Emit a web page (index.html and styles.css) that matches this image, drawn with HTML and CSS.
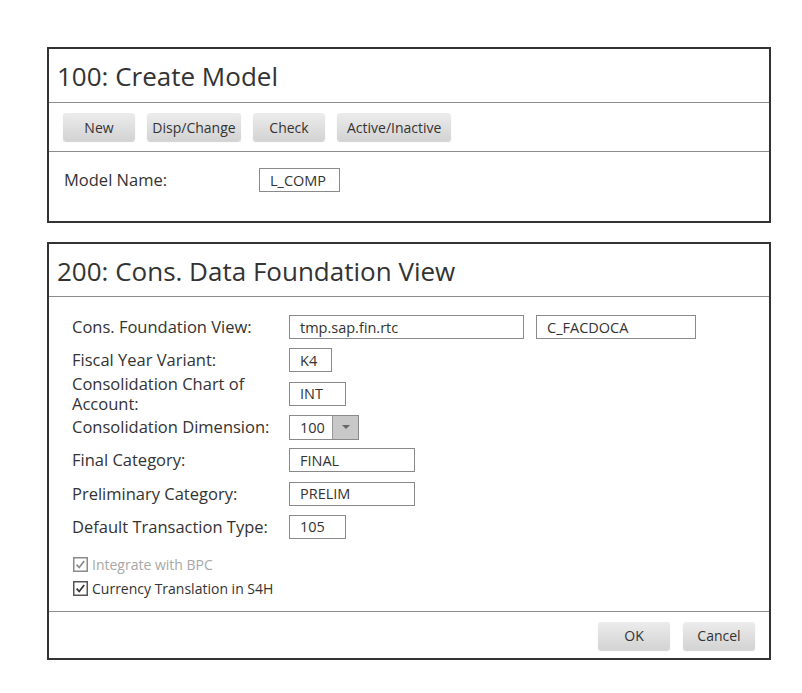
FILE: index.html
```html
<!DOCTYPE html>
<html>
<head>
<meta charset="utf-8">
<link rel="stylesheet" href="styles.css">
</head>
<body>
<section class="panel panel-model">
  <header class="panel-head"><h1 class="panel-title">100: Create Model</h1></header>
  <div class="toolbar">
    <button class="btn">New</button>
    <button class="btn btn-tight">Disp/Change</button>
    <button class="btn">Check</button>
    <button class="btn">Active/Inactive</button>
  </div>
  <div class="model-body">
    <span class="label model-label">Model Name:</span>
    <span class="field w-comp">L_COMP</span>
  </div>
</section>

<section class="panel panel-view">
  <header class="panel-head"><h1 class="panel-title">200: Cons. Data Foundation View</h1></header>
  <div class="view-body">
    <div class="form-grid">
      <span class="label">Cons. Foundation View:</span>
      <div class="field-pair">
        <span class="field w-pkg">tmp.sap.fin.rtc</span>
        <span class="field w-view">C_FACDOCA</span>
      </div>

      <span class="label">Fiscal Year Variant:</span>
      <div><span class="field w-k4">K4</span></div>

      <span class="label">Consolidation Chart of Account:</span>
      <div><span class="field w-int">INT</span></div>

      <span class="label">Consolidation Dimension:</span>
      <div>
        <span class="field select">
          <span class="select-value">100</span>
          <span class="select-btn"><svg width="10" height="6" viewBox="0 0 10 6"><path d="M1 1h8L5 5z" fill="#666"/></svg></span>
        </span>
      </div>

      <span class="label">Final Category:</span>
      <div><span class="field w-cat">FINAL</span></div>

      <span class="label">Preliminary Category:</span>
      <div><span class="field w-cat">PRELIM</span></div>

      <span class="label">Default Transaction Type:</span>
      <div><span class="field w-int">105</span></div>
    </div>

    <div class="checks">
      <label class="check disabled">
        <svg class="box" width="15" height="15" viewBox="0 0 15 15"><rect x="0.75" y="0.75" width="13.5" height="13.5" fill="#fff" stroke="#8a8a8a" stroke-width="1.5"/><path d="M3.6 7.6l2.6 2.9 5-6.6" fill="none" stroke="#8a8a8a" stroke-width="1.7"/></svg>
        <span>Integrate with BPC</span>
      </label>
      <label class="check">
        <svg class="box" width="15" height="15" viewBox="0 0 15 15"><rect x="0.75" y="0.75" width="13.5" height="13.5" fill="#fff" stroke="#555" stroke-width="1.5"/><path d="M3.6 7.6l2.6 2.9 5-6.6" fill="none" stroke="#333" stroke-width="1.7"/></svg>
        <span>Currency Translation in S4H</span>
      </label>
    </div>
  </div>
  <footer class="panel-foot">
    <button class="btn">OK</button>
    <button class="btn">Cancel</button>
  </footer>
</section>
</body>
</html>
```

FILE: styles.css
```css
* { box-sizing: border-box; }

body {
  margin: 0;
  padding: 47px 31px 0 47px;
  background: #fff;
  font-family: "Open Sans", "Noto Sans", sans-serif;
  color: #333;
}

.panel {
  border: 2px solid #333;
  background: #fff;
}

.panel-view { margin-top: 19px; }

.panel-head {
  height: 54px;
  border-bottom: 1px solid #8c8c8c;
  display: flex;
  align-items: center;
  padding-left: 8px;
}

.panel-view .panel-head { height: 53px; }

.panel-title {
  margin: 0;
  font-size: 26px;
  font-weight: 400;
  color: #333;
  line-height: 30px;
  padding-top: 1px;
}

.toolbar {
  height: 49px;
  border-bottom: 1px solid #8c8c8c;
  display: flex;
  align-items: center;
  gap: 12px;
  padding-left: 14px;
}

.btn {
  height: 28px;
  min-width: 72px;
  padding: 0 10px;
  border: none;
  border-radius: 3px;
  background: linear-gradient(#ececec, #d3d3d3);
  box-shadow: 0 1px 1px rgba(0, 0, 0, 0.18);
  font-family: inherit;
  font-size: 14px;
  color: #333;
}

.btn-tight { min-width: 94px; padding: 0 5px; }

.model-body {
  display: flex;
  align-items: center;
  padding: 16px 0 29px 15px;
}

.model-label { width: 195px; }

.label {
  font-size: 16.5px;
  line-height: 20px;
  color: #333;
}

.field {
  display: inline-flex;
  align-items: center;
  height: 24px;
  border: 1px solid #8a8a8a;
  padding-left: 10px;
  font-size: 14.5px;
  color: #333;
  background: #fff;
  vertical-align: top;
}

.w-comp { width: 81px; }
.w-pkg { width: 235px; }
.w-view { width: 160px; }
.w-k4 { width: 43px; }
.w-int { width: 57px; }
.w-cat { width: 126px; }

.view-body {
  padding: 18px 0 15px 23px;
}

.form-grid {
  display: grid;
  grid-template-columns: 207px auto;
  column-gap: 10px;
  grid-auto-rows: 24px;
  row-gap: 9.33px;
}

.form-grid .label {
  align-self: unsafe center;
}

.field-pair {
  display: flex;
  gap: 12px;
}

.select {
  width: 70px;
  height: 25px;
  padding-left: 0;
}

.select-value {
  flex: 1;
  padding-left: 10px;
}

.select-btn {
  width: 26px;
  height: 100%;
  background: #c8c8c8;
  border-left: 1px solid #9a9a9a;
  display: flex;
  align-items: center;
  justify-content: center;
}

.checks {
  margin-top: 18px;
  display: flex;
  flex-direction: column;
  gap: 9px;
  padding-left: 1px;
}

.check {
  display: flex;
  align-items: center;
  gap: 4px;
  font-size: 14px;
  line-height: 15px;
  color: #333;
}

.check.disabled { color: #a8a8a8; }

.box { flex: none; }

.panel-foot {
  border-top: 1px solid #8c8c8c;
  height: 47px;
  display: flex;
  justify-content: flex-end;
  align-items: flex-start;
  gap: 13px;
  padding: 10px 14px 0 0;
}
```
